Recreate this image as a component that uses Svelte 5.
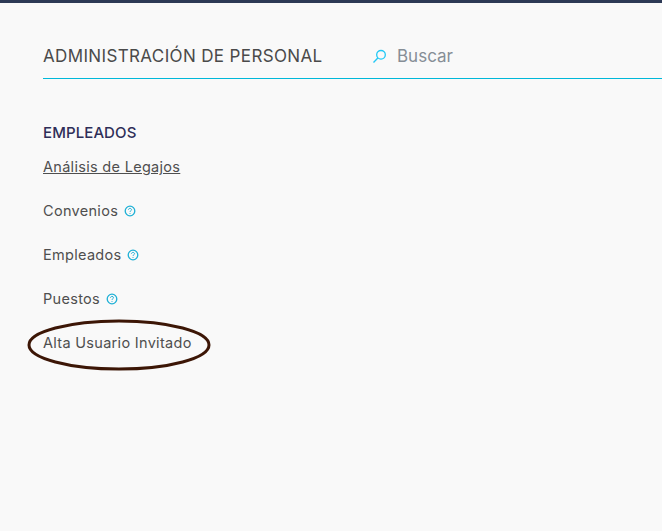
<script>
    const links = [
        { label: "Análisis de Legajos", underline: true },
        { label: "Convenios", help: true },
        { label: "Empleados", help: true },
        { label: "Puestos", help: true },
        { label: "Alta Usuario Invitado", circled: true },
    ];
</script>

<div class="page">
    <header class="header">
        <h1 class="title">ADMINISTRACIÓN DE PERSONAL</h1>
        <div class="search">
            <svg class="search-icon" viewBox="0 0 16 16" fill="none" stroke="currentColor" stroke-width="1.4">
                <circle cx="9.6" cy="6.2" r="4.6" />
                <path d="M6.2 9.6L1.6 14.4" />
            </svg>
            <span class="placeholder">Buscar</span>
        </div>
    </header>

    <section class="section">
        <h2 class="section-title">EMPLEADOS</h2>
        <ul class="list">
            {#each links as link}
                <li class="item">
                    <span class="link" class:underline={link.underline}>{link.label}</span>
                    {#if link.help}
                        <svg class="help" viewBox="0 0 12 12" fill="none" stroke="currentColor">
                            <circle cx="6" cy="6" r="4.8" stroke-width="1.3" />
                            <path d="M4.5 4.8c0-.9.7-1.4 1.5-1.4s1.5.5 1.5 1.3c0 1.1-1.5 1.1-1.5 2.2" stroke-width="1" />
                            <path d="M6 8v.9" stroke-width="1" />
                        </svg>
                    {/if}
                    {#if link.circled}
                        <svg class="ring" viewBox="0 0 184 52" fill="none">
                            <ellipse cx="92" cy="26" rx="90" ry="24" stroke="#3c1606" stroke-width="3" />
                        </svg>
                    {/if}
                </li>
            {/each}
        </ul>
    </section>
</div>

<style>
    :global(body) {
        background: #f9f9f9;
    }

    .page {
        min-height: 531px;
        box-sizing: border-box;
        border-top: 3px solid #2d3a55;
        background: #f9f9f9;
        padding: 0 0 0 43px;
        font-family: Inter, "Noto Sans", sans-serif;
        overflow: hidden;
    }

    .header {
        display: flex;
        align-items: center;
        height: 76px;
        box-sizing: border-box;
        border-bottom: 1px solid #00b8d9;
        padding-top: 31px;
    }

    .title {
        margin: 0;
        width: 329px;
        font-size: 17px;
        font-weight: 400;
        letter-spacing: 0.36px;
        color: #4a4a4a;
        white-space: nowrap;
    }

    .search {
        display: flex;
        align-items: center;
        gap: 10px;
    }

    .search-icon {
        width: 15px;
        height: 15px;
        color: #22c8f5;
    }

    .placeholder {
        font-size: 17px;
        color: #868e96;
    }

    .section {
        padding-top: 44px;
    }

    .section-title {
        margin: 0;
        font-size: 15px;
        line-height: 20px;
        font-weight: 500;
        letter-spacing: 0.1px;
        color: #2e2e58;
    }

    .list {
        list-style: none;
        margin: 0;
        padding: 14px 0 0;
    }

    .item {
        position: relative;
        display: flex;
        align-items: center;
        gap: 6px;
        height: 20px;
        margin-bottom: 24px;
    }

    .link {
        font-size: 14.5px;
        line-height: 20px;
        letter-spacing: 0.3px;
        color: #4f4f4f;
    }

    .underline {
        text-decoration: underline;
    }

    .help {
        width: 12px;
        height: 12px;
        color: #1eb0d6;
    }

    .ring {
        position: absolute;
        left: -16px;
        top: -14px;
        width: 184px;
        height: 52px;
    }
</style>
